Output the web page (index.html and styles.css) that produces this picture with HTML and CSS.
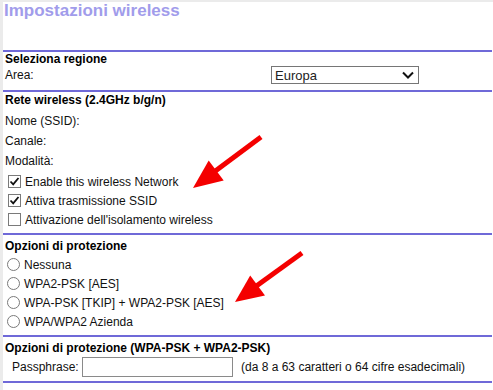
FILE: index.html
```html
<!DOCTYPE html>
<html lang="it">
<head>
    <meta charset="UTF-8">
    <title>Impostazioni wireless</title>
    <link rel="stylesheet" href="styles.css">
</head>
<body>

    <div class="page">
        <!-- Page Title -->
        <h1 class="title">Impostazioni wireless</h1>

        <!-- Region -->
        <section class="block block-region">
            <h2>Seleziona regione</h2>
            <div class="row row-area">
                <span class="area-label">Area:</span>
                <div class="select">
                    <span>Europa</span>
                    <svg width="12" height="8" viewBox="0 0 12 8"><polyline points="1,1.5 6,6.5 11,1.5" fill="none" stroke="#111" stroke-width="2"/></svg>
                </div>
            </div>
        </section>

        <!-- Wireless network -->
        <section class="block block-net">
            <h2>Rete wireless (2.4GHz b/g/n)</h2>
            <div class="fields">
                <div class="row">Nome (SSID):</div>
                <div class="row">Canale:</div>
                <div class="row">Modalità:</div>
            </div>
            <div class="checks">
                <label class="opt"><span class="box"><svg width="11" height="11" viewBox="0 0 11 11"><polyline points="1.5,5.5 4.2,8.3 9.5,2" fill="none" stroke="#111" stroke-width="1.8"/></svg></span>Enable this wireless Network</label>
                <label class="opt"><span class="box"><svg width="11" height="11" viewBox="0 0 11 11"><polyline points="1.5,5.5 4.2,8.3 9.5,2" fill="none" stroke="#111" stroke-width="1.8"/></svg></span>Attiva trasmissione SSID</label>
                <label class="opt"><span class="box"></span>Attivazione dell'isolamento wireless</label>
            </div>
        </section>

        <!-- Security options -->
        <section class="block block-sec">
            <h2>Opzioni di protezione</h2>
            <div class="radios">
                <label class="opt"><span class="radio"></span>Nessuna</label>
                <label class="opt"><span class="radio"></span>WPA2-PSK [AES]</label>
                <label class="opt"><span class="radio"></span>WPA-PSK [TKIP] + WPA2-PSK [AES]</label>
                <label class="opt"><span class="radio"></span>WPA/WPA2 Azienda</label>
            </div>
        </section>

        <!-- Passphrase -->
        <section class="block block-pass">
            <h2>Opzioni di protezione (WPA-PSK + WPA2-PSK)</h2>
            <div class="row row-pass">
                <span class="pass-label">Passphrase:</span>
                <input class="pass-input" type="text">
                <span class="pass-hint">(da 8 a 63 caratteri o 64 cifre esadecimali)</span>
            </div>
        </section>
    </div>

    <!-- Red annotation arrows -->
    <svg class="arrows" width="493" height="390" viewBox="0 0 493 390">
        <line x1="261" y1="137" x2="214" y2="172" stroke="#f40000" stroke-width="5"/>
        <polygon points="193,188 223.7,180.6 208.7,160.6" fill="#f40000"/>
        <line x1="302" y1="253" x2="255" y2="287" stroke="#f40000" stroke-width="5"/>
        <polygon points="235,302 265,295.6 250.2,275.4" fill="#f40000"/>
    </svg>

</body>
</html>
```

FILE: styles.css
```css
/* General */
body {
    font-family: 'Liberation Sans', Arial, sans-serif;
    font-size: 12px;
    color: #111;
    margin: 0;
    background-color: #ebebeb;
    position: relative;
}

.page {
    margin: 2px 0 0 3px;
    background-color: #fff;
    min-height: 388px;
}

/* Title */
.title {
    margin: 0;
    height: 48px;
    padding-left: 1px;
    font-size: 17px;
    line-height: 17px;
    font-weight: bold;
    color: #a19ceb;
}

/* Blocks separated by purple rules */
.block {
    border-top: 2px solid #6f69d8;
    padding-left: 2px;
    margin-right: 1px;
}

.block h2 {
    margin: 0;
    font-size: 12px;
    line-height: 14px;
    font-weight: bold;
    color: #000;
}

.row {
    display: flex;
    align-items: center;
    height: 20px;
}

/* Region */
.block-region {
    padding-bottom: 6px;
}

.row-area {
    height: 18px;
}

.area-label {
    width: 266px;
}

.select {
    height: 16px;
    width: 139px;
    border: 1px solid #767676;
    display: flex;
    align-items: center;
    justify-content: space-between;
    padding: 0 4px 0 3px;
    font-size: 13px;
    color: #222;
}

/* Wireless network */
.block-net {
    padding-top: 1px;
    padding-bottom: 4px;
}

.fields {
    margin-top: 4px;
}

.checks {
    margin-top: 1px;
}

.opt {
    display: flex;
    align-items: center;
    height: 19px;
}

.box {
    width: 11px;
    height: 11px;
    border: 1px solid #7a7a7a;
    margin: 0 4px 0 3px;
    display: flex;
}

.radio {
    width: 11px;
    height: 11px;
    border: 1px solid #7a7a7a;
    border-radius: 50%;
    margin: 0 4px 0 2px;
}

/* Security */
.block-sec {
    padding-top: 4px;
    padding-bottom: 4px;
}

.radios {
    margin-top: 2px;
}

/* Passphrase */
.block-pass {
    padding-top: 4px;
    padding-bottom: 3px;
    border-bottom: 2px solid #6f69d8;
}

.row-pass {
    height: 22px;
    margin-top: 1px;
}

.pass-label {
    margin-left: 7px;
    width: 70px;
}

.pass-input {
    width: 151px;
    height: 20px;
    box-sizing: border-box;
    border: 1px solid #8a8a8a;
    margin: 0 8px 0 0;
    padding: 0;
}

/* Annotation overlay */
.arrows {
    position: absolute;
    top: 0;
    left: 0;
    pointer-events: none;
}
```
